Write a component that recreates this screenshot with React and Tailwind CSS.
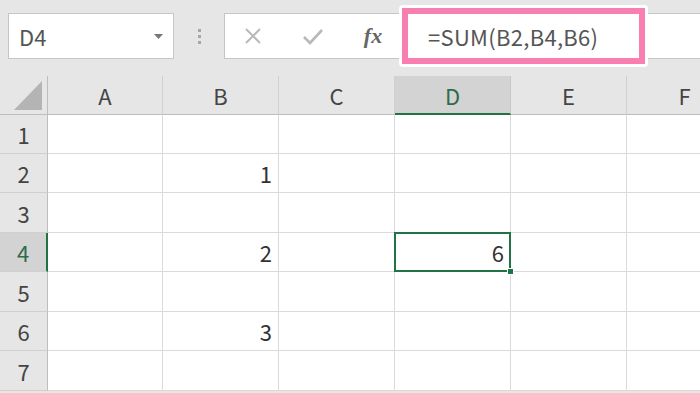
import React from "react";

const cols = ["A", "B", "C", "D", "E", "F"];
const colW = [115, 116, 116, 116, 116, 116];
const rowH = [39, 39, 40, 39, 40, 39, 40];
const data = { "2-B": "1", "4-B": "2", "6-B": "3", "4-D": "6" };

export default function App() {
  return (
    <div
      className="w-[700px] h-[393px] overflow-hidden bg-[#e6e6e6] relative"
      style={{ fontFamily: '"Noto Sans CJK JP", "Noto Sans", sans-serif' }}
    >
      {/* toolbar */}
      <div className="h-[76px] flex items-start pt-[13px] pl-[8px]">
        <div className="w-[166px] h-[46px] bg-white border border-[#c6c6c6] flex items-center justify-between pl-[10px] pr-[10px]">
          <span className="text-[22px] text-[#555] leading-none">D4</span>
          <svg width="9" height="5" viewBox="0 0 9 5">
            <path d="M0 0 L9 0 L4.5 5 Z" fill="#777" />
          </svg>
        </div>
        <div className="w-[50px] h-[46px] flex flex-col items-center justify-center gap-[3px]">
          <div className="w-[3px] h-[3px] bg-[#a6a6a6]" />
          <div className="w-[3px] h-[3px] bg-[#a6a6a6]" />
          <div className="w-[3px] h-[3px] bg-[#a6a6a6]" />
        </div>
        <div className="flex-1 h-[46px] bg-white border border-r-0 border-[#c6c6c6] flex items-center">
          <div className="w-[60px] flex justify-center ml-[-2px]">
            <svg width="20" height="20" viewBox="0 0 20 20">
              <path d="M3 3 L17 17 M17 3 L3 17" stroke="#b9b9b9" strokeWidth="2" fill="none" />
            </svg>
          </div>
          <div className="w-[60px] flex justify-center">
            <svg width="22" height="20" viewBox="0 0 22 20">
              <path d="M2 11 L8 17 L20 4" stroke="#b9b9b9" strokeWidth="2.6" fill="none" />
            </svg>
          </div>
          <div className="w-[60px] flex justify-center">
            <span
              className="text-[22px] italic font-bold text-[#666] leading-none"
              style={{ fontFamily: '"Liberation Serif", serif' }}
            >
              fx
            </span>
          </div>
        </div>
      </div>

      {/* formula highlight */}
      <div className="absolute left-[399px] top-[5px] w-[249px] h-[62px] bg-white rounded-[4px] p-[3px] z-20">
        <div className="w-full h-full border-[6px] border-[#f97fb0] bg-white flex items-center pl-[20px]">
          <span className="text-[22px] text-[#555] leading-none tracking-[0.3px]">=SUM(B2,B4,B6)</span>
        </div>
      </div>

      {/* grid */}
      <div className="flex flex-col">
        {/* header row */}
        <div className="flex h-[39px]">
          <div className="w-[48px] shrink-0 border-r border-b border-[#bdbdbd] bg-[#e6e6e6] flex items-end justify-end pr-[5px] pb-[4px]">
            <svg width="28" height="29" viewBox="0 0 28 29">
              <path d="M28 0 L28 29 L0 29 Z" fill="#b4b4b4" />
            </svg>
          </div>
          {cols.map((c, i) => (
            <div
              key={c}
              style={{ width: colW[i] }}
              className={
                "shrink-0 flex items-center justify-center text-[22px] leading-none " +
                (c === "D"
                  ? "bg-[#d3d3d3] text-[#2f6b4a] border-r border-[#c8c8c8] border-b-2 border-b-[#217346]"
                  : "bg-[#e6e6e6] text-[#444] border-r border-[#d0d0d0] border-b border-b-[#bdbdbd]")
              }
            >
              {c}
            </div>
          ))}
        </div>
        {rowH.map((h, r) => {
          const rn = r + 1;
          const sel = rn === 4;
          return (
            <div key={rn} className="flex" style={{ height: h }}>
              <div
                className={
                  "w-[48px] shrink-0 flex items-center justify-center text-[22px] leading-none border-b border-[#d0d0d0] " +
                  (sel
                    ? "bg-[#d3d3d3] text-[#2f6b4a] border-r-2 border-r-[#217346]"
                    : "bg-[#e6e6e6] text-[#444] border-r border-r-[#bdbdbd]")
                }
              >
                {rn}
              </div>
              {cols.map((c, i) => {
                const v = data[`${rn}-${c}`];
                const active = sel && c === "D";
                return (
                  <div
                    key={c}
                    style={{ width: colW[i] }}
                    className={
                      "shrink-0 bg-white border-r border-b border-[#dadada] relative flex items-center justify-end pr-[6px] text-[22px] text-[#333] leading-none " +
                      (active ? "z-10" : "")
                    }
                  >
                    {v}
                    {active && (
                      <div className="absolute left-[-1px] top-[-1px] right-[-1px] bottom-[-1px] border-2 border-[#217346]">
                        <div className="absolute right-[-5px] bottom-[-5px] w-[7px] h-[7px] bg-[#217346] border border-white" />
                      </div>
                    )}
                  </div>
                );
              })}
            </div>
          );
        })}
      </div>
    </div>
  );
}
